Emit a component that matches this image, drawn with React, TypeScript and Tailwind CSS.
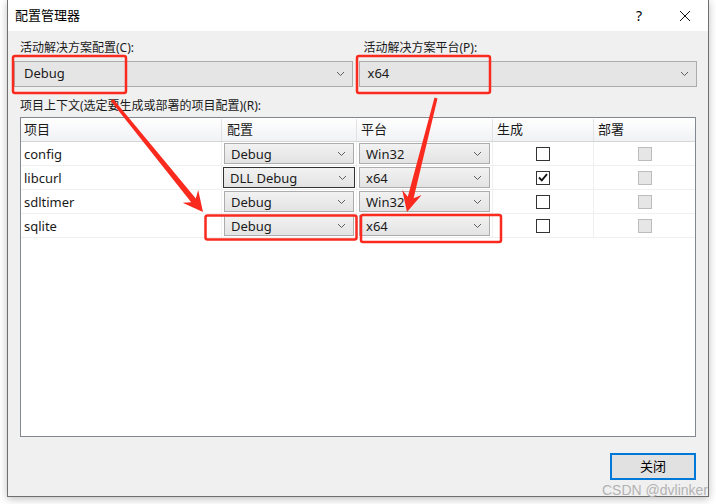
import React from "react";

const FONT = '"Noto Sans", "Noto Sans CJK SC", sans-serif';

interface Row {
  name: string;
  config: string;
  platform: string;
  build: boolean;
  focused?: boolean;
}

const rows: Row[] = [
  { name: "config", config: "Debug", platform: "Win32", build: false },
  { name: "libcurl", config: "DLL Debug", platform: "x64", build: true, focused: true },
  { name: "sdltimer", config: "Debug", platform: "Win32", build: false },
  { name: "sqlite", config: "Debug", platform: "x64", build: false },
];

function Chevron() {
  return (
    <svg width="9" height="6" viewBox="0 0 9 6" className="shrink-0">
      <path d="M1 1 L4.5 4.5 L8 1" fill="none" stroke="#5f5f5f" strokeWidth="1" />
    </svg>
  );
}

function CellCombo({ value, focused }: { value: string; focused?: boolean }) {
  return (
    <div
      className={`flex h-[21px] items-center justify-between bg-gradient-to-b from-[#f2f2f2] to-[#e3e3e3] pl-[6px] pr-[7px] text-[13px] text-[#1a1a1a] ${
        focused ? "mx-[1px] border border-[#333]" : "mx-[2px] border border-[#acacac]"
      }`}
    >
      <span className="pt-[2px] leading-none">{value}</span>
      <Chevron />
    </div>
  );
}

function Check({ checked, disabled }: { checked?: boolean; disabled?: boolean }) {
  if (disabled) {
    return <div className="h-[14px] w-[14px] border border-[#bcbcbc] bg-[#e6e6e6]" />;
  }
  return (
    <div className="flex h-[14px] w-[14px] items-center justify-center border border-[#333] bg-white">
      {checked && (
        <svg width="10" height="9" viewBox="0 0 10 9">
          <path d="M1 4.5 L3.8 7.3 L9 1.2" fill="none" stroke="#111" strokeWidth="1.8" />
        </svg>
      )}
    </div>
  );
}

export default function App() {
  return (
    <div className="relative h-[504px] w-[716px] overflow-hidden bg-white" style={{ fontFamily: FONT }}>
      {/* 窗口 */}
      <div className="ml-[7px] flex h-[497px] w-[702px] flex-col border-x border-b border-[#6f6f6f] bg-[#f0f0f0] shadow-[0_2px_8px_rgba(0,0,0,0.25)]">
        {/* 标题栏 */}
        <div className="flex h-[31px] items-center bg-white pl-[7px] text-[13px] text-black">
          <span>配置管理器</span>
          <span className="ml-auto text-[14px]">?</span>
          <svg width="12" height="12" viewBox="0 0 12 12" className="ml-[37px] mr-[17px]">
            <path d="M1 1 L11 11 M11 1 L1 11" stroke="#111" strokeWidth="1" />
          </svg>
        </div>

        <div className="flex flex-1 flex-col pl-[6px] pr-[11px] pt-[9px] text-[12px] text-[#1a1a1a]">
          {/* 活动解决方案 */}
          <div className="grid grid-cols-2 gap-x-[6px]">
            <div className="flex flex-col">
              <span className="h-[16px] pl-[6px] leading-[16px]">活动解决方案配置(C):</span>
              <div className="mt-[5px] flex h-[26px] items-center justify-between border border-[#acacac] bg-[#e5e5e5] pl-[9px] pr-[7px] text-[13px]">
                <span>Debug</span>
                <Chevron />
              </div>
            </div>
            <div className="flex flex-col">
              <span className="h-[16px] pl-[5px] leading-[16px]">活动解决方案平台(P):</span>
              <div className="mt-[5px] flex h-[26px] items-center justify-between border border-[#acacac] bg-[#e5e5e5] pl-[8px] pr-[7px] text-[13px]">
                <span>x64</span>
                <Chevron />
              </div>
            </div>
          </div>

          <span className="mt-[10px] h-[16px] pl-[6px] pt-[1px] leading-[16px]">项目上下文(选定要生成或部署的项目配置)(R):</span>

          {/* 项目表格 */}
          <div className="ml-[6px] mr-[1px] mt-[4px] h-[320px] border border-[#828790] bg-white">
            <div className="grid h-[24px] grid-cols-[201px_135px_136px_101px_101px] border-b border-[#d5d5d5] bg-gradient-to-b from-white to-[#f1f2f5] pt-[1px] text-[13px]">
              <div className="flex items-center border-r border-[#e3e3e3] pl-[3px]">项目</div>
              <div className="flex items-center border-r border-[#e3e3e3] pl-[5px]">配置</div>
              <div className="flex items-center border-r border-[#e3e3e3] pl-[4px]">平台</div>
              <div className="flex items-center border-r border-[#e3e3e3] pl-[4px]">生成</div>
              <div className="flex items-center pl-[4px]">部署</div>
            </div>
            {rows.map((r) => (
              <div
                key={r.name}
                className="grid h-[24px] grid-cols-[201px_135px_136px_101px_101px] border-b border-[#efefef] text-[13px]"
              >
                <div className="flex items-center border-r border-[#efefef] pl-[3px] pt-[2px]">{r.name}</div>
                <div className="flex flex-col justify-center border-r border-[#efefef]">
                  <CellCombo value={r.config} focused={r.focused} />
                </div>
                <div className="flex flex-col justify-center border-r border-[#efefef]">
                  <CellCombo value={r.platform} />
                </div>
                <div className="flex items-center justify-center border-r border-[#efefef]">
                  <Check checked={r.build} />
                </div>
                <div className="flex items-center justify-center">
                  <Check disabled />
                </div>
              </div>
            ))}
          </div>

          {/* 底部按钮 */}
          <div className="mr-[1px] mt-[16px] flex justify-end">
            <button className="flex h-[27px] w-[86px] items-center justify-center border-2 border-[#0078d7] bg-[#e1e1e1] text-[13px] text-black">
              关闭
            </button>
          </div>
        </div>
      </div>

      {/* 水印 */}
      <span className="absolute left-[602px] top-[480px] text-[14px] text-[#b3b3b3]" style={{ fontFamily: '"Liberation Sans", Arial, sans-serif' }}>
        CSDN @dvlinker
      </span>

      {/* 红色标注 */}
      <svg className="pointer-events-none absolute left-0 top-0" width="716" height="504" viewBox="0 0 716 504">
        <g fill="none" stroke="#fa2a1e" strokeWidth="2.5">
          <rect x="13" y="56" width="113" height="37" rx="2" />
          <rect x="357" y="56" width="133" height="37" rx="2" />
          <rect x="205.5" y="215.5" width="151" height="24" rx="2" />
          <rect x="361" y="215" width="140" height="27" rx="2" />
        </g>
        <g fill="#fa2a1e">
          <polygon points="110.8,101 191.2,202.2 182.6,202.7 203,212 198.2,190.1 195.8,198.4 113.2,99" />
          <polygon points="434.5,97.6 407.8,196.8 402.2,190.1 407,212 421.6,195.1 413.6,198.2 437.5,98.4" />
        </g>
      </svg>
    </div>
  );
}
